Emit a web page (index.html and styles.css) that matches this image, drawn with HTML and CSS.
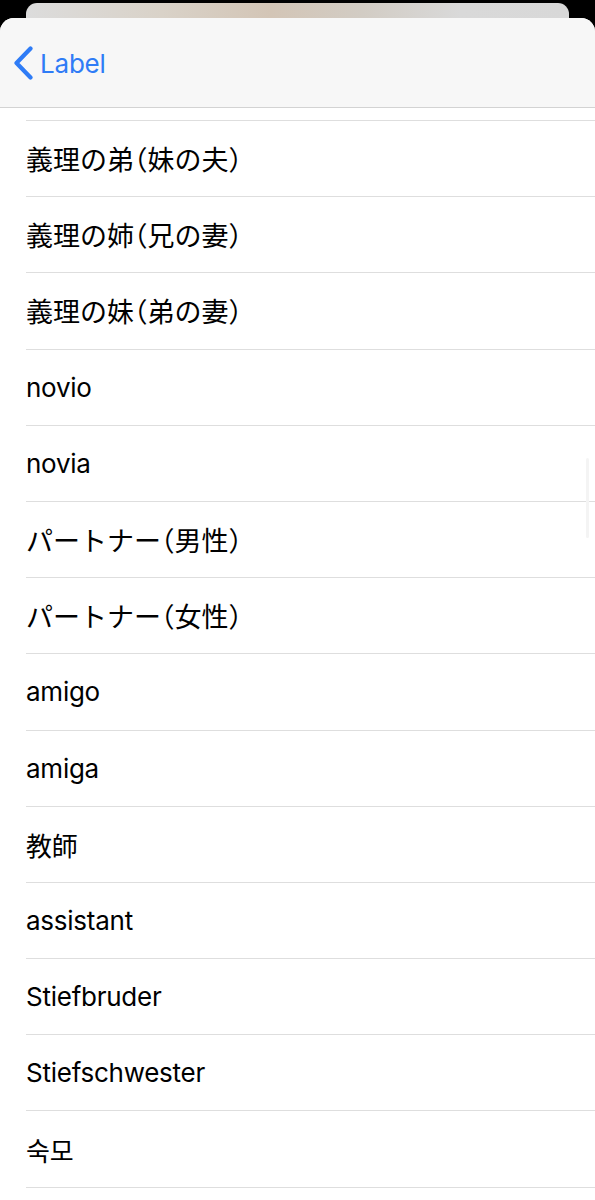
FILE: index.html
```html
<!DOCTYPE html>
<html lang="ja">
<head>
    <meta charset="UTF-8">
    <meta name="viewport" content="width=device-width, initial-scale=1.0">
    <title>Label</title>
    <link rel="stylesheet" href="styles.css">
</head>

<body>
    <!-- cartão de trás -->
    <div class="back-card"></div>

    <div class="sheet">
        <div class="nav">
            <a class="back" href="#">
                <svg class="chevron" width="22" height="34" viewBox="0 0 22 34">
                    <path d="M18.5 2.5 L4.5 17 L18.5 31.5" fill="none" stroke="currentColor" stroke-width="4.2" stroke-linecap="round" stroke-linejoin="round"/>
                </svg>
                <span>Label</span>
            </a>
        </div>

        <div class="list">
            <div class="row row-hidden"></div>
            <div class="row ja">義理の弟（妹の夫）</div>
            <div class="row ja">義理の姉（兄の妻）</div>
            <div class="row ja">義理の妹（弟の妻）</div>
            <div class="row">novio</div>
            <div class="row">novia</div>
            <div class="row ja">パートナー（男性）</div>
            <div class="row ja">パートナー（女性）</div>
            <div class="row">amigo</div>
            <div class="row">amiga</div>
            <div class="row">教師</div>
            <div class="row">assistant</div>
            <div class="row">Stiefbruder</div>
            <div class="row">Stiefschwester</div>
            <div class="row" lang="ko">숙모</div>
            <div class="row row-tail"></div>
            <div class="scroll-bar"></div>
        </div>
    </div>
</body>
</html>
```

FILE: styles.css
```css
body {
    margin: 0;
    background: #000;
    font-family: Inter, "Noto Sans CJK JP", "Noto Sans CJK KR", sans-serif;
    overflow: hidden;
}

.back-card {
    height: 15px;
    margin: 3px 26px 0;
    border-radius: 11px 11px 0 0;
    background: linear-gradient(to right, #dcdcdc, #d9d2c8 25%, #d3c5b6 45%, #d2ccc4 62%, #d9d9d9 80%, #d8d8d8);
}

.sheet {
    background: #fff;
    border-radius: 14px 14px 0 0;
    overflow: hidden;
    height: 1182px;
}

.nav {
    height: 89px;
    background: #f7f7f7;
    border-bottom: 1px solid #d3d3d3;
    display: flex;
    align-items: center;
}

.back {
    display: flex;
    align-items: center;
    gap: 6px;
    margin-left: 12px;
    margin-top: 1px;
    color: #2f7cf6;
    text-decoration: none;
    font-size: 26px;
    letter-spacing: -0.2px;
}

.chevron {
    display: block;
}

.list {
    position: relative;
}

.row {
    height: 75.2px;
    margin-left: 26px;
    border-bottom: 1px solid #dedede;
    display: flex;
    align-items: center;
    font-size: 26px;
    letter-spacing: -0.25px;
    color: #000;
    font-feature-settings: "halt";
}

/* linhas em japonês com parênteses */
.row.ja {
    font-size: 27px;
    letter-spacing: 0;
}

.row-hidden {
    height: 12px;
}

.row-tail {
    border-bottom: none;
}

.row[lang="ko"] {
    font-family: Inter, "Noto Sans CJK KR", sans-serif;
}

/* indicador de rolagem */
.scroll-bar {
    position: absolute;
    right: 6px;
    top: 350px;
    width: 3px;
    height: 80px;
    border-radius: 2px;
    background: #f4f4f4;
}
```
